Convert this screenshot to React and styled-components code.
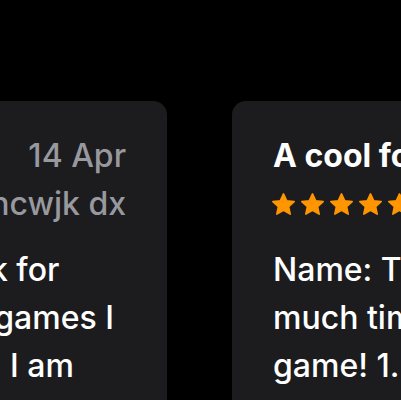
import React from "react";
import styled, { createGlobalStyle } from "styled-components";

const GlobalStyle = createGlobalStyle`
  html, body {
    margin: 0;
    background: #000;
  }
  body {
    font-family: Inter, "Noto Sans", sans-serif;
    -webkit-font-smoothing: antialiased;
  }
`;

const Viewport = styled.div`
  width: 401px;
  height: 400px;
  overflow: hidden;
  background: #000;
  padding-top: 101px;
  box-sizing: border-box;
`;

const Track = styled.div`
  display: flex;
  gap: 65px;
  margin-left: ${(props) => props.offset}px;
`;

const Card = styled.div`
  flex: 0 0 ${(props) => props.width}px;
  height: 330px;
  box-sizing: border-box;
  padding: 31px 41px 0;
  background: #1c1c1e;
  border-radius: 14px;
  overflow: hidden;
`;

const Header = styled.div`
  display: flex;
  justify-content: space-between;
  gap: 20px;
`;

const TitleBlock = styled.div`
  flex: 1;
  min-width: 0;
`;

const Title = styled.div`
  color: #fff;
  font-size: 32px;
  font-weight: 700;
  line-height: 48px;
  white-space: nowrap;
  overflow: hidden;
  text-overflow: ellipsis;
`;

const Stars = styled.div`
  display: flex;
  align-items: center;
  gap: 4px;
  height: 48px;
  margin-left: -2px;
`;

const Meta = styled.div`
  flex-shrink: 0;
  text-align: right;
  color: #98989f;
  font-size: 32px;
  font-weight: 500;
  line-height: 48px;
  white-space: nowrap;
`;

const Body = styled.div`
  margin-top: 18px;
  color: #fff;
  font-size: 32px;
  font-weight: 500;
  line-height: 48px;
  white-space: nowrap;
`;

const Star = () => (
  <svg width="25" height="24" viewBox="0 0 24 23">
    <path
      d="M12 1.8l3.1 6.6 7.1.8-5.3 4.9 1.5 7.1L12 17.6l-6.4 3.6 1.5-7.1L1.8 9.2l7.1-.8z"
      fill="#ff9500"
      stroke="#ff9500"
      strokeWidth="1.6"
      strokeLinejoin="round"
    />
  </svg>
);

const reviews = [
  {
    width: 489,
    title: "Great app",
    date: "14 Apr",
    author: "ncwjk dx",
    lines: ["A great app to look for", "all of the greatest games I", "want to play often. I am"],
  },
  {
    width: 520,
    title: "A cool for finding games",
    date: "2 Mar",
    author: "gamer",
    lines: ["Name: The Game Finder", "much time looking for a", "game! 1. Search 2. Play"],
  },
];

const ReviewCard = ({ review }) => (
  <Card width={review.width}>
    <Header>
      <TitleBlock>
        <Title>{review.title}</Title>
        <Stars>
          {[0, 1, 2, 3, 4].map((i) => (
            <Star key={i} />
          ))}
        </Stars>
      </TitleBlock>
      <Meta>
        <div>{review.date}</div>
        <div>{review.author}</div>
      </Meta>
    </Header>
    <Body>
      {review.lines.map((line, i) => (
        <div key={i}>{line}</div>
      ))}
    </Body>
  </Card>
);

export default function App() {
  return (
    <>
      <GlobalStyle />
      <Viewport>
        <Track offset={-322}>
          {reviews.map((r, i) => (
            <ReviewCard key={i} review={r} />
          ))}
        </Track>
      </Viewport>
    </>
  );
}
